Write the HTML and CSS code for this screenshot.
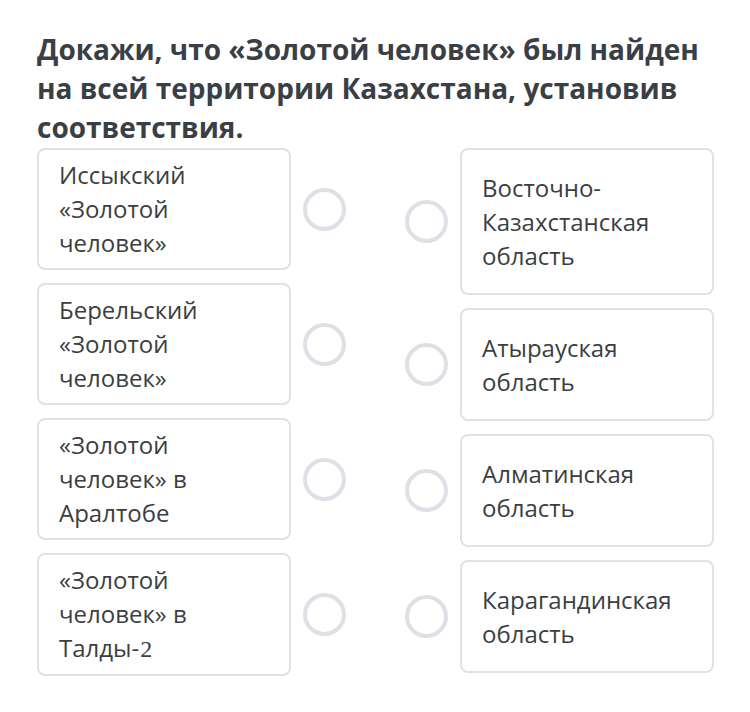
FILE: index.html
```html
<!DOCTYPE html>
<html lang="ru">
<head>
<meta charset="utf-8">
<link rel="stylesheet" href="styles.css">
</head>
<body>
<div class="page">
  <h1 class="title">Докажи, что «Золотой человек» был найден на всей территории Казахстана, установив соответствия.</h1>
  <div class="match">
    <div class="col col-left">
      <div class="item">
        <div class="card card-left">Иссыкский «Золотой человек»</div>
        <span class="dot"></span>
      </div>
      <div class="item">
        <div class="card card-left">Берельский «Золотой человек»</div>
        <span class="dot"></span>
      </div>
      <div class="item">
        <div class="card card-left">«Золотой человек» в Аралтобе</div>
        <span class="dot"></span>
      </div>
      <div class="item">
        <div class="card card-left">«Золотой человек» в Талды-<span class="serif">2</span></div>
        <span class="dot"></span>
      </div>
    </div>
    <div class="col col-right">
      <div class="item">
        <span class="dot"></span>
        <div class="card card-right">Восточно-Казахстанская область</div>
      </div>
      <div class="item">
        <span class="dot"></span>
        <div class="card card-right">Атырауская область</div>
      </div>
      <div class="item">
        <span class="dot"></span>
        <div class="card card-right">Алматинская область</div>
      </div>
      <div class="item">
        <span class="dot"></span>
        <div class="card card-right">Карагандинская область</div>
      </div>
    </div>
  </div>
</div>
</body>
</html>
```

FILE: styles.css
```css
html, body {
  margin: 0;
  padding: 0;
  background: #ffffff;
}

body {
  font-family: "Open Sans", "Noto Sans", sans-serif;
  color: #3b3e42;
}

.page {
  width: 750px;
  height: 712px;
  box-sizing: border-box;
  padding: 30px 0 0 37px;
}

.title {
  margin: 0 0 1px 0;
  width: 675px;
  font-size: 28px;
  line-height: 39px;
  font-weight: 700;
  color: #3a3f46;
}

.match {
  display: flex;
  gap: 59px;
}

.col {
  display: flex;
  flex-direction: column;
  gap: 13px;
}

.item {
  display: flex;
  align-items: center;
  gap: 12px;
}

.card {
  box-sizing: border-box;
  width: 254px;
  border: 2px solid #e2e2e2;
  border-radius: 8px;
  background: #fff;
  font-size: 24px;
  line-height: 34px;
  color: #3b3e42;
}

.card-left {
  padding: 8px 20px;
}

.card-right {
  padding: 21px 20px 20px;
}

.serif {
  font-family: "Liberation Serif", serif;
  margin-left: 1px;
}

.dot {
  flex: none;
  width: 43px;
  height: 43px;
  box-sizing: border-box;
  border: 4px solid #dde1e6;
  border-radius: 50%;
}
```
